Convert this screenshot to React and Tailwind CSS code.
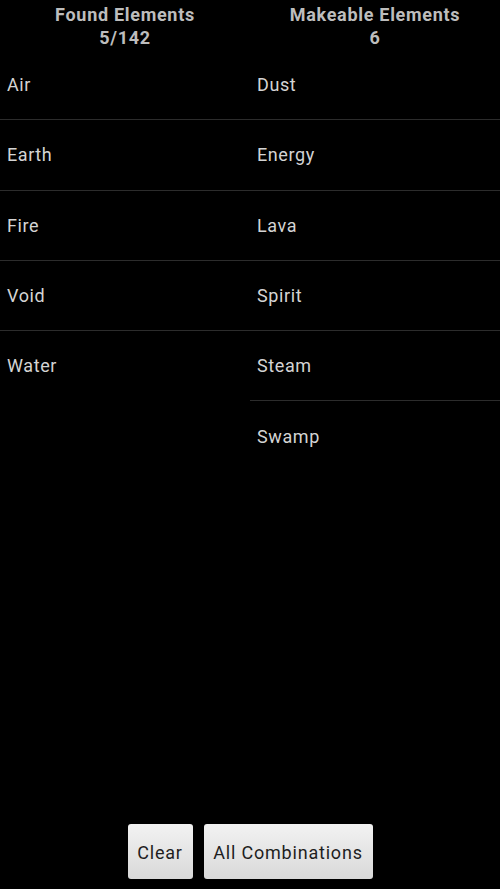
import React from "react";

const found = ["Air", "Earth", "Fire", "Void", "Water"];
const makeable = ["Dust", "Energy", "Lava", "Spirit", "Steam", "Swamp"];

function List({ items }) {
  return (
    <div className="flex flex-col">
      {items.map((it, i) => (
        <div key={it} className="flex flex-col">
          {i > 0 && <div className="h-px bg-[#2c2c2c]" />}
          <div className="h-[69.3px] flex items-center pl-[7px] text-[18px] tracking-[0.6px] text-[#d4d4d4]">{it}</div>
        </div>
      ))}
    </div>
  );
}

export default function App() {
  return (
    <div
      className="w-[500px] h-[889px] bg-black flex flex-col"
      style={{ fontFamily: "Roboto, 'Liberation Sans', sans-serif" }}
    >
      <div className="grid grid-cols-2 h-[50px] pt-[3px] text-[18px] font-bold leading-[23px] tracking-[0.7px] text-[#bdbdbd] text-center">
        <div>
          <div>Found Elements</div>
          <div>5/142</div>
        </div>
        <div>
          <div>Makeable Elements</div>
          <div>6</div>
        </div>
      </div>
      <div className="grid grid-cols-2 flex-1 items-start">
        <List items={found} />
        <List items={makeable} />
      </div>
      <div className="flex justify-center gap-[11px] pb-[10px]">
        <button className="h-[55px] w-[65px] rounded-[3px] bg-gradient-to-b from-[#f2f2f2] to-[#d9d9d9] pt-[2px] text-[18px] tracking-[0.8px] text-[#1e1e1e]">
          Clear
        </button>
        <button className="h-[55px] w-[169px] rounded-[3px] bg-gradient-to-b from-[#f2f2f2] to-[#d9d9d9] pt-[2px] text-[18px] tracking-[0.8px] text-[#1e1e1e]">
          All Combinations
        </button>
      </div>
    </div>
  );
}
